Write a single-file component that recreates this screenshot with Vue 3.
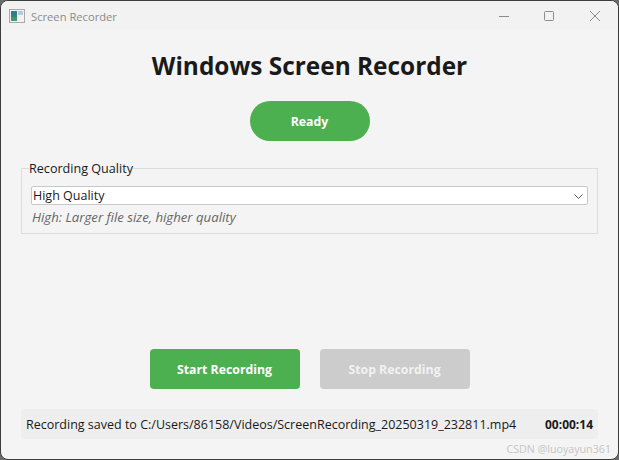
<script setup>
const status = 'Recording saved to C:/Users/86158/Videos/ScreenRecording_20250319_232811.mp4'
</script>

<template>
  <div class="window">
    <header class="titlebar">
      <div class="title-left">
        <svg class="app-icon" width="16" height="14" viewBox="0 0 16 14">
          <rect x="0.5" y="0.5" width="15" height="13" fill="#f2f2f2" stroke="#a9a9a9" />
          <rect x="2" y="2" width="6" height="10" fill="#2f7f8c" />
          <rect x="2" y="8" width="6" height="4" fill="#3f9a63" />
          <rect x="9" y="2" width="5" height="4" fill="#b9c9d6" />
        </svg>
        <span class="title">Screen Recorder</span>
      </div>
      <div class="controls">
        <svg class="min" width="10" height="10" viewBox="0 0 10 10"><path d="M0 5.5H10" stroke="#8c8c8c" fill="none" /></svg>
        <svg width="10" height="10" viewBox="0 0 10 10"><rect x="0.5" y="0.5" width="9" height="9" rx="1" stroke="#8c8c8c" fill="none" /></svg>
        <svg width="10" height="10" viewBox="0 0 10 10"><path d="M0 0L10 10M10 0L0 10" stroke="#8c8c8c" fill="none" /></svg>
      </div>
    </header>

    <main class="content">
      <h1 class="heading">Windows Screen Recorder</h1>
      <div class="pill">Ready</div>

      <fieldset class="group">
        <legend class="legend">Recording Quality</legend>
        <div class="combo">
          <span>High Quality</span>
          <svg width="9" height="5" viewBox="0 0 9 5"><path d="M0.5 0.5L4.5 4.5L8.5 0.5" stroke="#555" fill="none" /></svg>
        </div>
        <div class="hint">High: Larger file size, higher quality</div>
      </fieldset>

      <div class="spacer"></div>

      <div class="actions">
        <button class="btn start">Start Recording</button>
        <button class="btn stop" disabled>Stop Recording</button>
      </div>

      <div class="statusbar">
        <span class="status">{{ status }}</span>
        <span class="time">00:00:14</span>
      </div>
    </main>
    <span class="watermark">CSDN  @luoyayun361</span>
  </div>
</template>

<style>
html, body { margin: 0; background: #6b6b6b; }
</style>

<style scoped>
.window {
  position: relative;
  box-sizing: border-box;
  width: 619px;
  height: 460px;
  display: flex;
  flex-direction: column;
  background: #f4f4f4;
  border: 1px solid #3d3d3d;
  border-radius: 8px;
  overflow: hidden;
  font-family: "Open Sans", "Noto Sans", sans-serif;
  color: #1a1a1a;
}
.titlebar {
  height: 30px;
  flex: none;
  display: flex;
  align-items: center;
  justify-content: space-between;
  background: #f2f2f2;
}
.title-left { display: flex; align-items: center; gap: 6px; padding-left: 8px; }
.title { font-size: 11.2px; color: #8b8b8b; }
.controls { display: flex; align-items: center; gap: 36px; padding-right: 18px; }
.min { margin-right: -1px; }
.content {
  flex: 1;
  display: flex;
  flex-direction: column;
  align-items: center;
  padding: 0 20px 20px;
  min-height: 0;
}
.heading {
  margin: 15px 0 0;
  height: 40px;
  line-height: 40px;
  font-size: 24.4px;
  font-weight: 700;
  color: #1a1a1a;
  white-space: nowrap;
}
.pill {
  margin-top: 15px;
  width: 120px;
  height: 40px;
  border-radius: 20px;
  background: #4caf50;
  color: #fff;
  font-size: 12.3px;
  font-weight: 700;
  display: flex;
  align-items: center;
  justify-content: center;
}
.group {
  align-self: stretch;
  box-sizing: border-box;
  margin: 19px 0 0;
  height: 74px;
  padding: 9px 9px 0;
  border: 1px solid #dcdcdc;
  min-width: 0;
}
.legend {
  margin-left: -2px;
  padding: 0;
  font-size: 12.6px;
  line-height: 17px;
  color: #1a1a1a;
}
.combo {
  box-sizing: border-box;
  height: 19px;
  display: flex;
  align-items: center;
  justify-content: space-between;
  background: #fff;
  border: 1px solid #c8c8c8;
  border-radius: 2px;
  padding: 0 4px 0 1px;
  font-size: 12.5px;
  color: #1a1a1a;
}
.combo svg { margin-top: 2px; }
.hint {
  margin-top: 3px;
  padding-left: 1px;
  font-size: 13.2px;
  line-height: 18px;
  font-style: italic;
  color: #666;
}
.spacer { flex: 1; }
.actions { display: flex; gap: 20px; }
.btn {
  width: 150px;
  height: 40px;
  border: 0;
  border-radius: 4px;
  color: #fff;
  font-family: inherit;
  font-size: 12.3px;
  font-weight: 700;
  padding: 0;
}
.start { background: #4caf50; }
.stop { background: #cccccc; color: #f2f2f2; }
.statusbar {
  align-self: stretch;
  margin-top: 20px;
  height: 30px;
  box-sizing: border-box;
  display: flex;
  align-items: center;
  justify-content: space-between;
  padding: 0 5px;
  background: #eeeeee;
  border-radius: 3px;
  font-size: 12.5px;
  white-space: nowrap;
}
.time { font-weight: 700; font-size: 12px; }
.watermark {
  position: absolute;
  right: 7px;
  bottom: 3px;
  font-size: 10.7px;
  color: #c6c6c6;
  white-space: pre;
}
</style>
